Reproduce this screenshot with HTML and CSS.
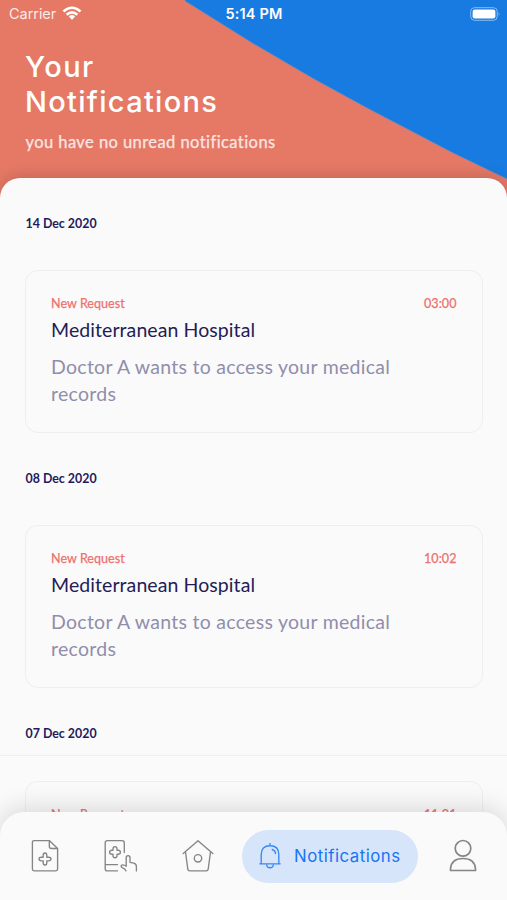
FILE: index.html
```html
<!DOCTYPE html>
<html lang="en">
<head>
<meta charset="utf-8">
<meta name="viewport" content="width=device-width, initial-scale=1">
<title>Notifications</title>
<link rel="stylesheet" href="styles.css">
</head>
<body>
<div class="app">
  <header class="hero">
    <svg class="hero-bg" viewBox="0 0 507 200" preserveAspectRatio="none" aria-hidden="true"><path d="M185 -2H509V180L453 153L366 107.5L313 78.5L253 43.5L185 1Z" fill="#187be1" stroke="#7e8cae" stroke-width=".8" stroke-linejoin="round"/></svg>
    <div class="status">
      <div class="carrier"><span class="carrier-name">Carrier</span>
        <svg width="20" height="15" viewBox="0 0 20 15" fill="none" stroke="#fff" stroke-width="2.5"><path d="M1.5 5.5Q10-2 18.5 5.5M4.6 8.7Q10 4 15.4 8.7"/><path d="M6.8 10.4Q10 7.8 13.2 10.4L10 13.8Z" fill="#fff" stroke="none"/></svg>
      </div>
      <div class="clock">5:14 PM</div>
      <svg class="battery" width="31" height="14" viewBox="0 0 31 14"><rect x=".7" y=".7" width="26.5" height="12.6" rx="3.8" fill="none" stroke="#8bbcf0" stroke-width="1"/><rect x="2.6" y="2.6" width="22.8" height="8.8" rx="2.2" fill="#fff"/><path d="M28.6 5Q30.4 7 28.6 9Z" fill="#8bbcf0"/></svg>
    </div>
    <h1 class="title"><span class="t1">Your</span><br><span class="t2">Notifications</span></h1>
    <p class="subtitle">you have no unread notifications</p>
  </header>
  <main class="sheet">
    <section class="day">
      <h2 class="date">14 Dec 2020</h2>
      <article class="card">
        <div class="meta"><span class="kind">New Request</span><span class="time">03:00</span></div>
        <h3 class="name">Mediterranean Hospital</h3>
        <p class="text">Doctor A wants to access your medical<br>records</p>
      </article>
    </section>
    <section class="day">
      <h2 class="date">08 Dec 2020</h2>
      <article class="card">
        <div class="meta"><span class="kind">New Request</span><span class="time">10:02</span></div>
        <h3 class="name">Mediterranean Hospital</h3>
        <p class="text">Doctor A wants to access your medical<br>records</p>
      </article>
    </section>
    <section class="day">
      <h2 class="date ruled">07 Dec 2020</h2>
      <article class="card">
        <div class="meta"><span class="kind">New Request</span><span class="time">11:21</span></div>
      </article>
    </section>
  </main>
  <nav class="tabs">
    <svg class="icon" width="28" height="34" viewBox="0 0 28 34"><path d="M18.3 1.6H3.2Q1.4 1.6 1.4 3.4V30.1Q1.4 31.9 3.2 31.9H24.8Q26.6 31.9 26.6 30.1V9.5L18.3 1.6V7.2Q18.3 9.5 20.6 9.5H26.6"/><path d="M12.2 16.3Q12.2 14 14 14T15.8 16.3V18.2H17.7Q20 18.2 20 20T17.7 21.8H15.8V23.7Q15.8 26 14 26T12.2 23.7V21.8H10.3Q8 21.8 8 20T10.3 18.2H12.2Z"/></svg>
    <svg class="icon i2" width="34" height="34" viewBox="0 0 34 34"><path d="M20.3 13.5V3.8Q20.3 1.6 18 1.6H3.5Q1.2 1.6 1.2 3.8V29.7Q1.2 31.9 3.5 31.9H13.5M1.2 25.6H13.5"/><path d="M9 9.9Q9 7.6 11 7.6T13 9.9V11.2H14.1Q16.4 11.2 16.4 13.2T14.1 15.2H13V16.4Q13 18.7 11 18.7T9 16.4V15.2H7.9Q5.6 15.2 5.6 13.2T7.9 11.2H9Z"/><path d="M22 31.9Q21.2 29.8 18.3 28.6Q16.2 27.5 17.8 26.1Q19.5 25.2 22.2 27.2V18.8Q22.2 16.6 24.1 16.6T26 18.8V23.3L29.8 24.2Q32.4 25 32.4 27.5V31.9"/></svg>
    <svg class="icon i3" width="32" height="34" viewBox="0 0 32 34"><path d="M1.2 14.6L16 1.7L30.8 14.6M3.5 13L5.8 30.2Q6 31.9 7.8 31.9H24.2Q26 31.9 26.2 30.2L28.5 13"/><circle cx="16" cy="19.3" r="3.7"/></svg>
    <div class="active">
      <svg class="bell" width="22" height="26" viewBox="0 0 22 26"><path d="M2.2 20.5V11.5Q2.2 2.7 11 2.7T19.8 11.5V20.5M.8 20.8H21.2M11 .5V2.7M7.8 22.2Q8 24.7 11 24.7T14.2 22.2M13.2 6.5Q16.2 7.5 16.6 10.5"/></svg>
      <span class="label">Notifications</span>
    </div>
    <svg class="icon i5" width="28" height="34" viewBox="0 0 28 34"><circle cx="14" cy="9.3" r="7.8"/><path d="M1.5 31.5V30Q2.2 19.5 14 19.5T26.5 30V31.5Z"/></svg>
  </nav>
</div>
</body>
</html>
```

FILE: styles.css
```css
* { box-sizing: border-box; }
body { margin: 0; background: #fafafb; font-family: Lato, "Open Sans", sans-serif; }
h1, h2, h3, p { margin: 0; font-weight: 400; }
.app { position: relative; height: 900px; overflow: hidden; }
.hero { position: relative; height: 178px; background: #e57966; color: #fff; }
.hero-bg { position: absolute; left: 0; top: 0; width: 100%; height: 200px; }
.hero { box-shadow: 0 22px 0 #e57966; }
.status { position: relative; height: 28px; padding: 0 8px 0 9px; display: grid; grid-template-columns: 1fr auto 1fr; align-items: center; font: 14.5px/28px Inter, sans-serif; }
.carrier { display: flex; align-items: center; gap: 6px; color: #fbeae6; margin-right: 4px; }
.carrier-name { width: 47px; letter-spacing: -.05px; }
.carrier svg { margin-top: -2px; }
.clock { font-weight: 600; letter-spacing: .15px; }
.battery { justify-self: end; margin-right: -2px; }
.title { position: relative; padding: 21px 25px 0; font: 500 29px/35px Inter, sans-serif; }
.t1 { letter-spacing: 1.5px; }
.t2 { letter-spacing: 1.3px; }
.subtitle { position: relative; padding: 11px 25.5px 0; font-size: 16.5px; line-height: 24px; letter-spacing: .43px; color: #fbe5e4; -webkit-text-stroke: .25px; }
.sheet { position: relative; height: 722px; background: #fafafb; border-radius: 20px 20px 0 0; box-shadow: 0 -2px 14px rgba(70, 40, 40, .22); }
.day { height: 255.3px; }
.date { height: 67px; padding: 35.5px 25.5px 0; font-size: 12.4px; line-height: 20px; font-weight: 700; color: #241a5c; }
.ruled { border-bottom: 1px solid #f0f0f1; }
.card { margin: 25px 24.5px 0 25px; height: 163px; padding: 24px 25px; border: 1px solid #eeeef0; border-radius: 13px; }
.meta { display: flex; justify-content: space-between; font-size: 12.5px; line-height: 18px; letter-spacing: .06px; color: #ed716d; -webkit-text-stroke: .25px; }
.name { margin-top: 3px; font-size: 19.5px; line-height: 27px; letter-spacing: .08px; color: #241c55; }
.text { margin-top: 10px; font-size: 19.5px; line-height: 27px; letter-spacing: .28px; color: #918eaa; }
.tabs { position: absolute; left: 0; right: 0; bottom: 0; height: 88px; padding: 0 31px; display: flex; align-items: center; background: #fafafb; border-radius: 24px 24px 0 0; box-shadow: 0 -5px 24px rgba(0, 0, 0, .13); }
.icon, .bell { flex: none; fill: none; stroke: #858585; stroke-width: 1.35; stroke-linecap: round; stroke-linejoin: round; }
.i2 { margin-left: 45px; }
.i3 { margin-left: 43.5px; }
.active { margin-left: 28.5px; width: 176px; height: 53px; flex: none; border-radius: 27px; background: #d6e5f9; display: flex; align-items: center; padding-left: 17px; gap: 13px; color: #1974f3; }
.bell { stroke: #3787f7; }
.label { font: 400 16.8px/24px Inter, sans-serif; letter-spacing: .5px; }
.i5 { margin-left: 31px; stroke-width: 1.7; }
```
